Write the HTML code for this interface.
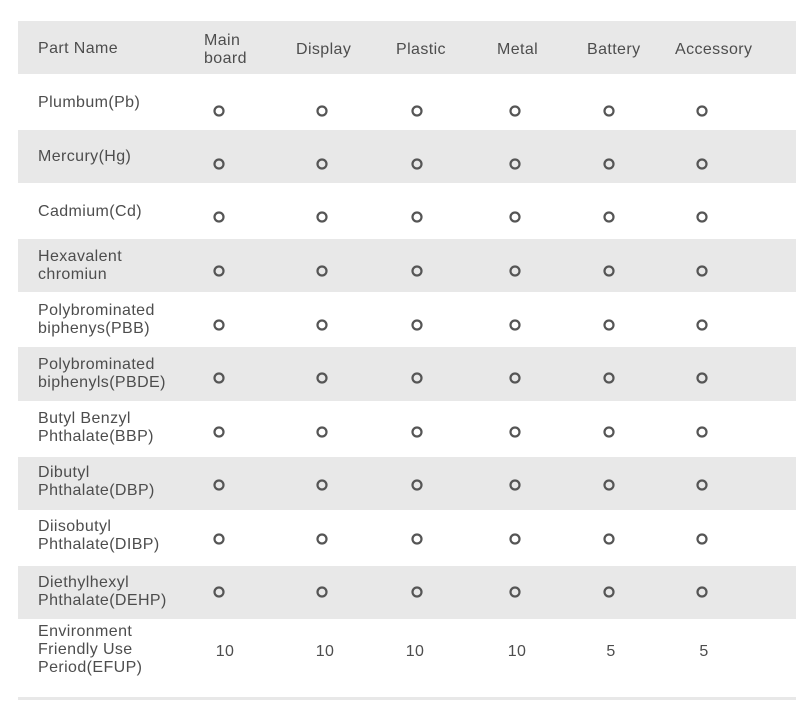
<!DOCTYPE html>
<html><head><meta charset="utf-8"><style>
body{margin:0;width:796px;height:705px;background:#fff;position:relative;overflow:hidden;font-family:"Liberation Sans",sans-serif;font-size:16px;color:#4d4d4d;letter-spacing:0.4px;}
.g{position:absolute;left:18px;width:778px;background:#e8e8e8;}
.t{position:absolute;line-height:18px;white-space:nowrap;}
.l{left:38px;}
.n{position:absolute;line-height:18px;transform:translateX(-50%);}
</style></head><body>
<div class="g" style="top:21px;height:53px"></div>
<div class="g" style="top:130px;height:53px"></div>
<div class="g" style="top:239px;height:53px"></div>
<div class="g" style="top:347px;height:54px"></div>
<div class="g" style="top:457px;height:53px"></div>
<div class="g" style="top:566px;height:53px"></div>
<div class="g" style="top:697px;height:3px"></div>

<div class="t l" style="top:40px">Part Name</div>
<div class="t" style="left:204px;top:32px">Main<br>board</div>
<div class="t" style="left:296px;top:41px">Display</div>
<div class="t" style="left:396px;top:41px">Plastic</div>
<div class="t" style="left:497px;top:41px">Metal</div>
<div class="t" style="left:587px;top:41px">Battery</div>
<div class="t" style="left:675px;top:41px">Accessory</div>

<div class="t l" style="top:94px">Plumbum(Pb)</div>
<div class="t l" style="top:148px">Mercury(Hg)</div>
<div class="t l" style="top:203px">Cadmium(Cd)</div>
<div class="t l" style="top:248px">Hexavalent<br>chromiun</div>
<div class="t l" style="top:302px">Polybrominated<br>biphenys(PBB)</div>
<div class="t l" style="top:356px">Polybrominated<br>biphenyls(PBDE)</div>
<div class="t l" style="top:410px">Butyl Benzyl<br>Phthalate(BBP)</div>
<div class="t l" style="top:464px">Dibutyl<br>Phthalate(DBP)</div>
<div class="t l" style="top:518px">Diisobutyl<br>Phthalate(DIBP)</div>
<div class="t l" style="top:574px">Diethylhexyl<br>Phthalate(DEHP)</div>
<div class="t l" style="top:623px">Environment<br>Friendly Use<br>Period(EFUP)</div>

<svg style="position:absolute;left:0;top:0" width="796" height="705">
<g fill="none" stroke="#555" stroke-width="2.2">
<g transform="translate(0,111)"><circle cx="219" r="4.5"/><circle cx="322" r="4.5"/><circle cx="417" r="4.5"/><circle cx="515" r="4.5"/><circle cx="609" r="4.5"/><circle cx="702" r="4.5"/></g>
<g transform="translate(0,164)"><circle cx="219" r="4.5"/><circle cx="322" r="4.5"/><circle cx="417" r="4.5"/><circle cx="515" r="4.5"/><circle cx="609" r="4.5"/><circle cx="702" r="4.5"/></g>
<g transform="translate(0,217)"><circle cx="219" r="4.5"/><circle cx="322" r="4.5"/><circle cx="417" r="4.5"/><circle cx="515" r="4.5"/><circle cx="609" r="4.5"/><circle cx="702" r="4.5"/></g>
<g transform="translate(0,271)"><circle cx="219" r="4.5"/><circle cx="322" r="4.5"/><circle cx="417" r="4.5"/><circle cx="515" r="4.5"/><circle cx="609" r="4.5"/><circle cx="702" r="4.5"/></g>
<g transform="translate(0,325)"><circle cx="219" r="4.5"/><circle cx="322" r="4.5"/><circle cx="417" r="4.5"/><circle cx="515" r="4.5"/><circle cx="609" r="4.5"/><circle cx="702" r="4.5"/></g>
<g transform="translate(0,378)"><circle cx="219" r="4.5"/><circle cx="322" r="4.5"/><circle cx="417" r="4.5"/><circle cx="515" r="4.5"/><circle cx="609" r="4.5"/><circle cx="702" r="4.5"/></g>
<g transform="translate(0,432)"><circle cx="219" r="4.5"/><circle cx="322" r="4.5"/><circle cx="417" r="4.5"/><circle cx="515" r="4.5"/><circle cx="609" r="4.5"/><circle cx="702" r="4.5"/></g>
<g transform="translate(0,485)"><circle cx="219" r="4.5"/><circle cx="322" r="4.5"/><circle cx="417" r="4.5"/><circle cx="515" r="4.5"/><circle cx="609" r="4.5"/><circle cx="702" r="4.5"/></g>
<g transform="translate(0,539)"><circle cx="219" r="4.5"/><circle cx="322" r="4.5"/><circle cx="417" r="4.5"/><circle cx="515" r="4.5"/><circle cx="609" r="4.5"/><circle cx="702" r="4.5"/></g>
<g transform="translate(0,592)"><circle cx="219" r="4.5"/><circle cx="322" r="4.5"/><circle cx="417" r="4.5"/><circle cx="515" r="4.5"/><circle cx="609" r="4.5"/><circle cx="702" r="4.5"/></g>
</g>
</svg>
<div class="n" style="left:225px;top:643px">10</div>
<div class="n" style="left:325px;top:643px">10</div>
<div class="n" style="left:415px;top:643px">10</div>
<div class="n" style="left:517px;top:643px">10</div>
<div class="n" style="left:611px;top:643px">5</div>
<div class="n" style="left:704px;top:643px">5</div>
</body></html>
